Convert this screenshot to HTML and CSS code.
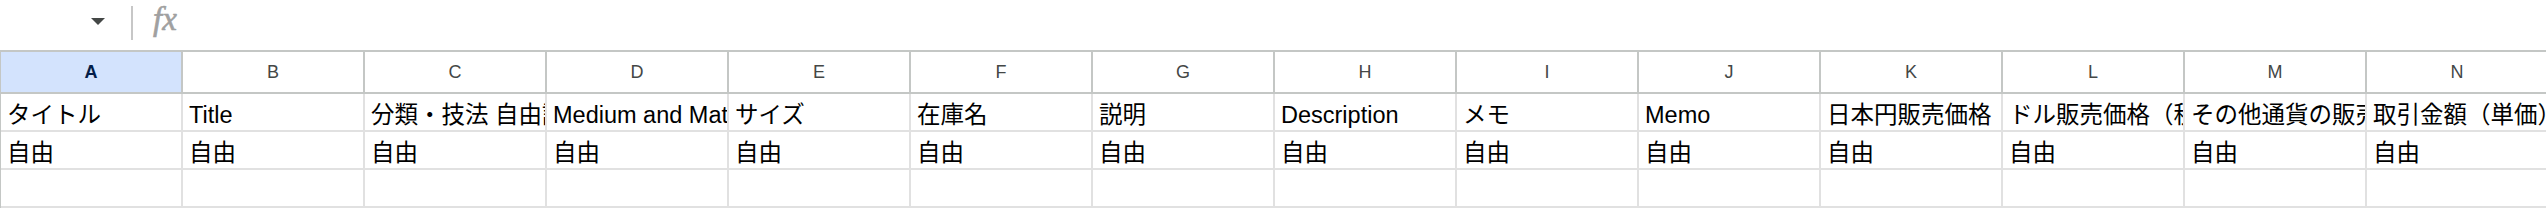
FILE: index.html
```html
<!DOCTYPE html>
<html lang="ja">
<head>
<meta charset="utf-8">
<title>Sheet</title>
<link rel="stylesheet" href="styles.css">
</head>
<body>
<div class="toolbar">
  <div class="namebox"><span class="caret"></span></div>
  <div class="divider"></div>
  <div class="fx">fx</div>
</div>
<div class="sheet">
  <div class="hdr sel">A</div>
  <div class="hdr">B</div>
  <div class="hdr">C</div>
  <div class="hdr">D</div>
  <div class="hdr">E</div>
  <div class="hdr">F</div>
  <div class="hdr">G</div>
  <div class="hdr">H</div>
  <div class="hdr">I</div>
  <div class="hdr">J</div>
  <div class="hdr">K</div>
  <div class="hdr">L</div>
  <div class="hdr">M</div>
  <div class="hdr">N</div>

  <div class="cell">タイトル</div>
  <div class="cell">Title</div>
  <div class="cell">分類・技法 自由記述</div>
  <div class="cell">Medium and Materials</div>
  <div class="cell">サイズ</div>
  <div class="cell">在庫名</div>
  <div class="cell">説明</div>
  <div class="cell">Description</div>
  <div class="cell">メモ</div>
  <div class="cell">Memo</div>
  <div class="cell">日本円販売価格</div>
  <div class="cell">ドル販売価格（税込）</div>
  <div class="cell">その他通貨の販売価格</div>
  <div class="cell">取引金額（単価）</div>

  <div class="cell">自由</div>
  <div class="cell">自由</div>
  <div class="cell">自由</div>
  <div class="cell">自由</div>
  <div class="cell">自由</div>
  <div class="cell">自由</div>
  <div class="cell">自由</div>
  <div class="cell">自由</div>
  <div class="cell">自由</div>
  <div class="cell">自由</div>
  <div class="cell">自由</div>
  <div class="cell">自由</div>
  <div class="cell">自由</div>
  <div class="cell">自由</div>

  <div class="cell"></div>
  <div class="cell"></div>
  <div class="cell"></div>
  <div class="cell"></div>
  <div class="cell"></div>
  <div class="cell"></div>
  <div class="cell"></div>
  <div class="cell"></div>
  <div class="cell"></div>
  <div class="cell"></div>
  <div class="cell"></div>
  <div class="cell"></div>
  <div class="cell"></div>
  <div class="cell"></div>
</div>
</body>
</html>
```
FILE: styles.css
```css
html, body {
  margin: 0;
  padding: 0;
  background: #ffffff;
  overflow: hidden;
  width: 2546px;
  height: 210px;
}

body {
  font-family: "Liberation Sans", "Noto Sans CJK JP", sans-serif;
  color: #000000;
}

.toolbar {
  display: flex;
  align-items: flex-start;
  height: 50px;
  box-sizing: border-box;
}

.namebox {
  width: 105px;
  height: 43px;
  display: flex;
  justify-content: flex-end;
  align-items: center;
  padding-right: 26px;
}

.caret {
  width: 0;
  height: 0;
  border-left: 7.5px solid transparent;
  border-right: 7.5px solid transparent;
  border-top: 7px solid #444746;
}

.divider {
  width: 2px;
  height: 34px;
  margin-top: 6px;
  background: #c7c7c7;
}

.fx {
  margin-left: 20px;
  margin-top: 3px;
  font-family: "Liberation Serif", serif;
  font-style: italic;
  font-size: 33px;
  line-height: 32px;
  letter-spacing: 0;
  -webkit-text-stroke: 0.6px #a0a0a0;
  color: #a0a0a0;
}

.sheet {
  display: grid;
  grid-template-columns: repeat(14, 182px);
  grid-template-rows: 42px 38px 38px 38px;
  border-top: 2px solid #c4c7c5;
  border-left: 1px solid #c4c7c5;
  width: max-content;
}

.hdr {
  box-sizing: border-box;
  border-right: 2px solid #c4c7c5;
  border-bottom: 2px solid #c4c7c5;
  display: flex;
  align-items: center;
  justify-content: center;
  font-family: "Liberation Sans", Arial, sans-serif;
  font-size: 18px;
  color: #444746;
}

.hdr.sel {
  background: #d3e3fd;
  color: #041e49;
  font-weight: bold;
}

.cell {
  box-sizing: border-box;
  border-right: 2px solid #e1e1e1;
  border-bottom: 2px solid #e1e1e1;
  display: flex;
  align-items: flex-end;
  padding: 0 6px 2px 6px;
  font-size: 23.5px;
  line-height: 26px;
  white-space: nowrap;
  overflow: hidden;
}
```
